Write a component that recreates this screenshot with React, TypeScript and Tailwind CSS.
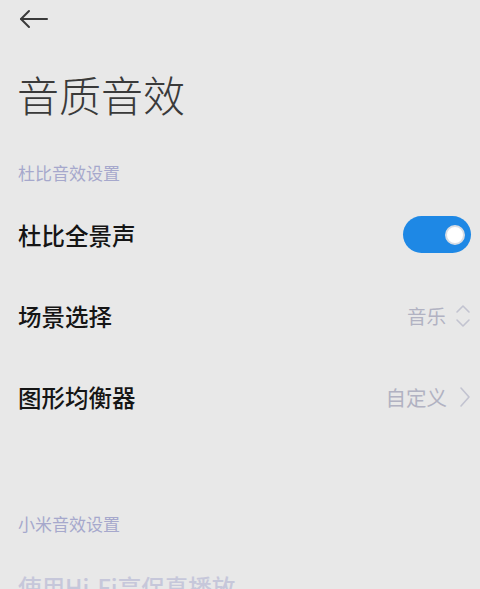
import React from 'react';

const font = { fontFamily: '"Noto Sans CJK SC", "Noto Sans", sans-serif' };

function Row({ label, children }: { label: string; children?: React.ReactNode }) {
  return (
    <div className="h-[81px] flex items-center justify-between pl-[18px] pr-[9px]">
      <span className="text-[23.5px] leading-[32px] font-medium text-[#151515]">{label}</span>
      {children}
    </div>
  );
}

export default function App() {
  return (
    <div className="w-[480px] h-[589px] overflow-hidden bg-[#e8e8e8]" style={font}>
      <div className="h-[38px] pl-[18px] flex items-center">
        <svg width="32" height="22" viewBox="0 0 32 22" fill="none" stroke="#3a3a3a" strokeWidth="2" strokeLinecap="round" strokeLinejoin="round">
          <path d="M29 11H3" />
          <path d="M11 3L3 11L11 19" />
        </svg>
      </div>

      <h1 className="mt-[28px] pl-[17px] text-[42px] leading-[56px] font-light text-[#3a3a3a]">音质音效</h1>

      <div className="mt-[39px] pl-[18px] text-[17px] leading-[24px] text-[#a6a8cc]">杜比音效设置</div>

      <div className="mt-[9px]">
        <Row label="杜比全景声">
          <div className="w-[68px] h-[37px] rounded-full bg-[#1e88e5] flex items-center justify-end pr-[6px]">
            <div className="w-[20px] h-[20px] rounded-full bg-white border-[2px] border-[#d8dde4]" />
          </div>
        </Row>
        <Row label="场景选择">
          <div className="flex items-center gap-[9px]">
            <span className="text-[19.5px] leading-[28px] text-[#b1b2c2]">音乐</span>
            <svg width="16" height="24" viewBox="0 0 16 24" fill="none" stroke="#c2c3d0" strokeWidth="1.6" strokeLinecap="round" strokeLinejoin="round">
              <path d="M2 8L8 2L14 8" />
              <path d="M2 16L8 22L14 16" />
            </svg>
          </div>
        </Row>
        <Row label="图形均衡器">
          <div className="flex items-center gap-[12px]">
            <span className="text-[20.5px] leading-[28px] text-[#b1b2c2]">自定义</span>
            <svg width="12" height="22" viewBox="0 0 12 22" fill="none" stroke="#c2c3d0" strokeWidth="1.6" strokeLinecap="round" strokeLinejoin="round">
              <path d="M2 2L10 11L2 20" />
            </svg>
          </div>
        </Row>
      </div>

      <div className="mt-[75px] pl-[18px] text-[17px] leading-[24px] text-[#a6a8cc]">小米音效设置</div>

      <div className="mt-[10px] h-[81px] flex items-center pl-[18px]">
        <span className="text-[23.5px] leading-[32px] font-medium text-[#c6c7da]">使用Hi-Fi高保真播放</span>
      </div>
    </div>
  );
}
